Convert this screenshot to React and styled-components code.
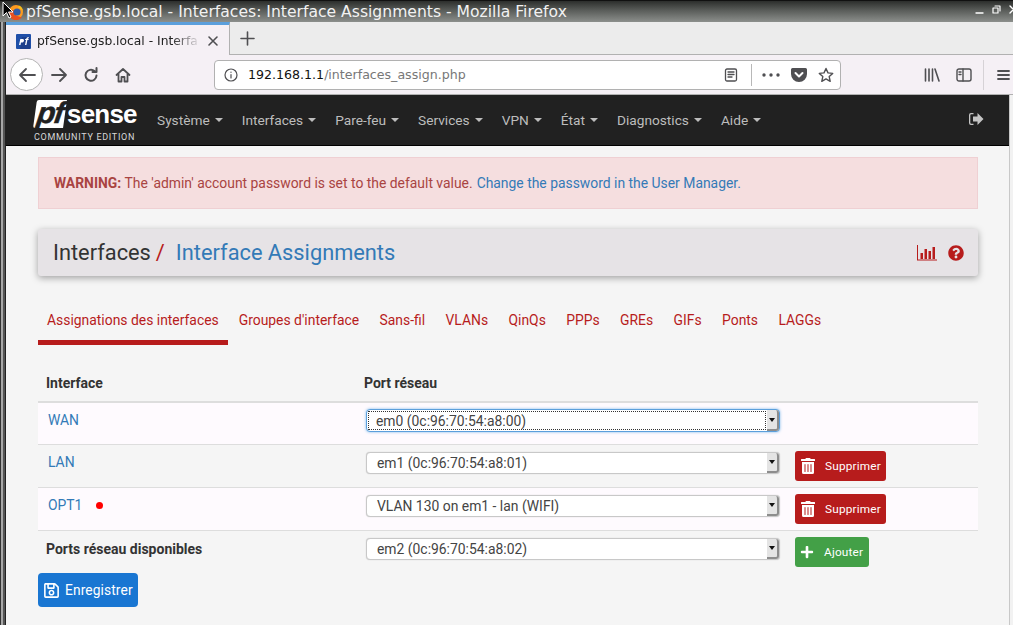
import React from 'react';
import styled, { createGlobalStyle } from 'styled-components';
import { FaTrashAlt, FaPlus, FaQuestionCircle, FaRegSave } from 'react-icons/fa';

const Global = createGlobalStyle`
  html, body { margin: 0; padding: 0; background: #f5f5f5; }
  * { box-sizing: border-box; }
`;

const Screen = styled.div`
  position: relative; width: 1013px; height: 625px; overflow: hidden;
  display: flex; flex-direction: column; background: #f5f5f5;
  font-family: Roboto, sans-serif; color: #333;
`;
const Titlebar = styled.div`
  height: 22px; flex: none; display: flex; align-items: center; padding: 0 0 0 8px;
  background: linear-gradient(#2c2e2c, #5a5d5a 45%, #8c8f8c);
  border-top: 1px solid #111;
  color: #f2f2f2; font: 15.6px "DejaVu Sans", sans-serif; white-space: nowrap;
`;
const TitleText = styled.span` margin-left: 2px; flex: 1; `;
const WinButtons = styled.div` display: flex; align-items: center; gap: 8px; width: 44px; margin-right: -6px; padding-bottom: 4px;`;
const Frame = styled.div`
  flex: 1; min-height: 0; display: flex; flex-direction: column; padding-left: 6px;
  background: linear-gradient(to right, #333 0 1px, #a8a8a8 1px 3px, #555 3px 5px, #222 5px 6px) left top / 6px 100% no-repeat;
`;
const TabStrip = styled.div`
  height: 33px; flex: none; display: flex; background: #ececec; border-bottom: 1px solid #b1b1b1;
`;
const ActiveTab = styled.div`
  width: 224px; height: 33px; display: flex; align-items: center; padding: 2px 10px 0 10px; gap: 6px;
  background: #f5f0f5; border-top: 3px solid #5b9fdc; border-right: 1px solid #b1b1b1;
  font: 12.3px "DejaVu Sans", sans-serif; color: #222; position: relative; z-index: 1;
`;
const TabLabel = styled.span`
  flex: 1; white-space: nowrap;
  -webkit-mask-image: linear-gradient(to right, #000 82%, transparent);
  mask-image: linear-gradient(to right, #000 82%, transparent);
`;
const NewTab = styled.div` width: 34px; display: flex; align-items: center; justify-content: center; `;
const Toolbar = styled.div`
  height: 40px; flex: none; display: flex; align-items: center; background: #f5f0f5;
  border-bottom: 1px solid #b1b1b1; padding-left: 4px; position: relative;
`;
const BackButton = styled.div`
  width: 33px; height: 33px; border-radius: 50%; background: #fff; border: 1px solid #b4b4b4;
  display: flex; align-items: center; justify-content: center; flex: none;
`;
const ToolIcon = styled.div`
  width: 32px; height: 32px; display: flex; align-items: center; justify-content: center; flex: none;
`;
const UrlBar = styled.div`
  margin-left: 75px; width: 627px; height: 30px; flex: none; background: #fff; border: 1px solid #b1b1b1; border-radius: 4px;
  display: flex; align-items: center; padding: 0 6px 0 9px; font: 12.6px "DejaVu Sans", sans-serif; color: #111;
`;
const UrlText = styled.span` margin-left: 10px; flex: 1; white-space: nowrap; `;
const UrlPath = styled.span` color: #777; `;
const UrlSep = styled.div` width: 1px; height: 22px; background: #b8b8b8; margin: 0 10px 0 13px; `;
const UrlIcons = styled.div` display: flex; align-items: center; gap: 11px; `;
const RightTools = styled.div` margin-left: 83px; display: flex; align-items: center; gap: 16px; `;
const ToolSep = styled.div` width: 1px; height: 30px; background: #d6d2d6; margin: 0 -3px 0 -5px;`;

const PageArea = styled.div` flex: 1; min-height: 0; display: flex; `;
const Page = styled.div` flex: 1; min-width: 0; display: flex; flex-direction: column; `;
const Scroll = styled.div` width: 4px; flex: none; background: #f2f2f2; border-left: 1px solid #c8c8c8; `;

const Nav = styled.nav`
  height: 51px; flex: none; background: #212121; border-bottom: 1px solid #000;
  display: flex; align-items: center; padding: 0 25px 0 28px; color: #bdbdbd; font-size: 13.7px;
`;
const Logo = styled.div` width: 103px; flex: none; color: #fff; margin-top: 2px; margin-right: 20px; `;
const LogoTop = styled.div` display: flex; align-items: center; height: 28px; `;
const LogoPf = styled.div`
  width: 30px; height: 28px; margin-left: 1px; background: #fff; color: #212121; transform: skewX(-8deg); border-radius: 2px 0 0 2px;
  font: italic 700 30px/25px "Liberation Sans", sans-serif; letter-spacing: -1.5px; text-align: center;
  -webkit-text-stroke: 0.5px #212121;
`;
const LogoSense = styled.span` font: 700 26px/28px "Liberation Sans", sans-serif; margin-left: 2px; letter-spacing: -0.8px; `;
const LogoSub = styled.div` font: 400 9px/10px Roboto, sans-serif; letter-spacing: 0.7px; color: #d8d8d8; white-space: nowrap; margin-top: 4px; `;
const NavItem = styled.div` display: flex; align-items: center; margin-right: 19px; white-space: nowrap; `;
const Caret = styled.span`
  display: inline-block; margin-left: 5px; border-top: 4px solid #bdbdbd; border-left: 4px solid transparent; border-right: 4px solid transparent;
`;
const NavSpacer = styled.div` flex: 1; `;

const Content = styled.main` flex: 1; min-height: 0; padding: 11px 31px 0 32px; display: flex; flex-direction: column; `;
const Alert = styled.div`
  height: 52px; flex: none; background: #f5dedf; border: 1px solid #efd0d3; color: #a94442; font-size: 13.9px;
  display: flex; align-items: center; padding: 0 15px; white-space: nowrap;
`;
const AlertLink = styled.span` color: #337ab7; margin-left: 4px; `;
const Heading = styled.div`
  margin-top: 20px; height: 47px; flex: none; background: #e6e3e6; border-radius: 3px; box-shadow: 0 2px 7px rgba(0,0,0,.35);
  display: flex; align-items: center; padding: 0 14px 0 15px; font-size: 21.8px; color: #333;
`;
const Slash = styled.span` color: #b71c1c; margin-left: 5px; margin-right: 11px; `;
const Crumb = styled.span` color: #337ab7; flex: 1; `;
const HeadIcons = styled.div` display: flex; align-items: center; gap: 11px; color: #b71c1c; `;
const Tabs = styled.div` margin-top: 20px; display: flex; height: 49px; flex: none; font-size: 13.9px; color: #b71c1c; `;
const TabItem = styled.div`
  padding: 16px ${p => (p.$active ? 9.4 : 10.4)}px 0 9px; height: 49px; white-space: nowrap;
  margin-right: ${p => (p.$active ? 1.6 : 1)}px;
  border-bottom: ${p => (p.$active ? '5px solid #b71c1c' : 'none')};
`;
const HeaderRow = styled.div`
  margin-top: 19px; height: 39px; flex: none; display: flex; align-items: center; font-weight: 700; font-size: 14px; padding-left: 8px;
  border-bottom: 2px solid #ddd;
`;
const InterfaceCol = styled.div` width: 318px; flex: none; `;
const Row = styled.div`
  height: ${p => p.$h}px; flex: none; display: flex; align-items: flex-start; background: ${p => (p.$tint ? '#fefafe' : 'transparent')};
  border-bottom: ${p => (p.$last ? 'none' : '1px solid #ddd')};
`;
const NameCell = styled.div`
  width: 328px; flex: none; padding: 0 0 0 10px; font-size: 13.9px; color: #337ab7; display: flex; align-items: center; height: 33px;
`;
const AvailableName = styled.div`
  width: 328px; flex: none; padding: 10px 0 0 8px; font-size: 14px; font-weight: 700; color: #333; white-space: nowrap;
`;
const Dot = styled.span` width: 7px; height: 7px; border-radius: 50%; background: #f00; margin-left: 14px; margin-top: 2px; `;
const SelectBox = styled.div`
  margin-top: ${p => p.$top}px; width: 414px; height: ${p => (p.$focus ? 23 : 22)}px; flex: none; display: flex; background: #fff; border-radius: 4px;
  border: 1px solid ${p => (p.$focus ? '#5b9fdc' : '#c8c8c8')};
  box-shadow: ${p => (p.$focus ? '0 0 3px #7db8ea' : '0 0 1px #bbb')};
  color: #444;
`;
const SelectValue = styled.div`
  flex: 1; line-height: ${p => (p.$focus ? 22 : 20)}px; padding-left: ${p => (p.$pad ? p.$pad : 10)}px; white-space: nowrap;
  outline: ${p => (p.$focus ? '1px dotted #333' : 'none')}; outline-offset: -2px; font-size: 13.9px;
`;
const SelectArrow = styled.div`
  width: 12px; flex: none; background: #e4e4e4; border-right: 2px solid #8d8d8d; border-bottom: 2px solid #8d8d8d;
  border-radius: 0 3px 3px 0; display: flex; align-items: center; justify-content: center;
`;
const Arrow = styled.span` border-top: 4px solid #111; border-left: 3px solid transparent; border-right: 3px solid transparent; `;
const ActionButton = styled.div`
  margin-left: 15px; margin-top: ${p => p.$top}px; height: 30px; width: ${p => p.$w}px; border-radius: 3px; flex: none;
  background: ${p => p.$bg}; color: #fff; display: flex; align-items: center; padding-left: 5px; font-size: 11.8px; letter-spacing: .2px;
`;
const ActionLabel = styled.span` margin-left: ${p => p.$gap}px; white-space: nowrap; `;
const SaveButton = styled.div`
  width: 100px; height: 34px; flex: none; border-radius: 4px; background: #1976d2; color: #fff; margin-top: 1px;
  display: flex; align-items: center; padding-left: 5px; font-size: 13.8px; letter-spacing: .1px; gap: 5px;
`;
const Cursor = styled.svg` position: absolute; left: 2px; top: 1px; `;

const Firefox = () => (
  <svg width="16" height="16" viewBox="0 0 16 16" style={{ flex: 'none' }}>
    <circle cx="8" cy="8" r="7" fill="#ff9a1f" />
    <path d="M2 5a7 7 0 0 0 12 8C9 13 5 10 6 6 4 7 3 6 2 5z" fill="#e8501f" />
    <circle cx="9" cy="8" r="3.6" fill="#2f5ca8" />
    <path d="M11 1.6A7 7 0 0 1 15 8c-1-3-3-4-5-4z" fill="#f6c21c" />
  </svg>
);
const Favicon = () => (
  <svg width="15" height="15" viewBox="0 0 15 15" style={{ flex: 'none' }}>
    <rect width="15" height="15" rx="1" fill="#1f4fa8" />
    <path d="M4 15l2-12h8v12z" fill="#1a3578" opacity=".6" />
    <path d="M3 11l1.3-6h2.3c1.4 0 1.6 1 1.3 2-.3 1-1.2 1.6-2.3 1.6H5L4.500 11zM9 11l1-5H9l.2-1h1c.2-1.300 1-2 2.800-1.800l-.2 1c-.8 0-1.100.2-1.200.8h1.100l-.2 1h-1.100l-1 5z" fill="#fff" />
  </svg>
);
const Stroke = ({ children, w = 16, h = 16, sw = 1.8, c = '#4f4f52' }) => (
  <svg width={w} height={h} viewBox={`0 0 ${w} ${h}`} fill="none" stroke={c} strokeWidth={sw} strokeLinecap="round" strokeLinejoin="round" style={{ flex: 'none' }}>{children}</svg>
);

const navs = ['Système', 'Interfaces', 'Pare-feu', 'Services', 'VPN', 'État', 'Diagnostics', 'Aide'];
const tabs = ['Assignations des interfaces', "Groupes d'interface", 'Sans-fil', 'VLANs', 'QinQs', 'PPPs', 'GREs', 'GIFs', 'Ponts', 'LAGGs'];

const Sel = ({ top, focus, pad, children }) => (
  <SelectBox $top={top} $focus={focus}>
    <SelectValue $focus={focus} $pad={pad}>{children}</SelectValue>
    <SelectArrow><Arrow /></SelectArrow>
  </SelectBox>
);
const Del = ({ top }) => (
  <ActionButton $top={top} $w={91} $bg="#b71c1c"><FaTrashAlt size={16} /><ActionLabel $gap={9}>Supprimer</ActionLabel></ActionButton>
);

export default function App() {
  return (
    <Screen>
      <Global />
      <Titlebar>
        <Firefox />
        <TitleText>pfSense.gsb.local - Interfaces: Interface Assignments - Mozilla Firefox</TitleText>
        <WinButtons>
          <Stroke w={9} h={9} sw={1.4} c="#fff"><path d="M1 8h7" /></Stroke>
          <Stroke w={9} h={9} sw={1.2} c="#fff"><path d="M3 1h5v5M1 3h5v5H1z" /></Stroke>
          <Stroke w={9} h={9} sw={1.4} c="#fff"><path d="M1 1l7 7M8 1L1 8" /></Stroke>
        </WinButtons>
      </Titlebar>
      <Frame>
        <TabStrip>
          <ActiveTab>
            <Favicon />
            <TabLabel>pfSense.gsb.local - Interfa</TabLabel>
            <Stroke w={12} h={12} sw={1.6}><path d="M2 2l8 8M10 2l-8 8" /></Stroke>
          </ActiveTab>
          <NewTab><Stroke w={15} h={15} sw={1.6}><path d="M7.500 1v13M1 7.500h13" /></Stroke></NewTab>
        </TabStrip>
        <Toolbar>
          <BackButton><Stroke w={18} h={16} sw={1.8}><path d="M17 8H2M8 2L2 8l6 6" /></Stroke></BackButton>
          <ToolIcon><Stroke w={16} h={14} sw={1.8}><path d="M1 7h14M9 1l6 6-6 6" /></Stroke></ToolIcon>
          <ToolIcon><Stroke w={16} h={16} sw={2}><path d="M13.500 8.500A5.500 5.500 0 1 1 11.500 4M13.500 1v4h-4" /></Stroke></ToolIcon>
          <ToolIcon><Stroke w={16} h={16} sw={1.8}><path d="M1.500 8L8 2l6.500 6M3.500 7v7.500h3V10h3v4.500h3V7" /></Stroke></ToolIcon>
          <UrlBar>
            <Stroke w={14} h={14} sw={1.2}><circle cx="7" cy="7" r="6" /><path d="M7 6.500v3.500M7 4v.3" /></Stroke>
            <UrlText>192.168.1.1<UrlPath>/interfaces_assign.php</UrlPath></UrlText>
            <Stroke w={14} h={14} sw={1.3}><rect x="1.500" y="1" width="11" height="12" rx="1.500" /><path d="M4 4h6M4 6.500h6M4 9h4" /></Stroke>
            <UrlSep />
            <UrlIcons>
              <svg width="18" height="4" viewBox="0 0 18 4" fill="#4f4f52"><circle cx="2" cy="2" r="1.700" /><circle cx="9" cy="2" r="1.700" /><circle cx="16" cy="2" r="1.700" /></svg>
              <svg width="16" height="14" viewBox="0 0 16 14"><path d="M1.500 0h13A1.500 1.500 0 0 1 16 1.500V6A8 8 0 0 1 0 6V1.500A1.500 1.500 0 0 1 1.500 0z" fill="#4f4f52" /><path d="M4.500 5L8 8.500 11.500 5" fill="none" stroke="#fff" strokeWidth="2" strokeLinecap="round" strokeLinejoin="round" /></svg>
              <Stroke w={16} h={16} sw={1.4}><path d="M8 1.500l2 4.400 4.700.5-3.500 3.200 1 4.700L8 11.900l-4.200 2.400 1-4.700L1.300 6.400 6 5.900z" /></Stroke>
            </UrlIcons>
          </UrlBar>
          <RightTools>
            <Stroke w={16} h={14} sw={1.6}><path d="M1.500 1v12M5 1v12M8.500 1v12M11 1l4 12" /></Stroke>
            <Stroke w={16} h={14} sw={1.4}><rect x="1" y="1" width="14" height="12" rx="2" /><path d="M7 1v12" /><path d="M3 4h2M3 6.500h2" /></Stroke>
            <ToolSep />
            <Stroke w={13} h={12} sw={1.8}><path d="M1 2h11M1 6h11M1 10h11" /></Stroke>
          </RightTools>
        </Toolbar>
        <PageArea>
          <Page>
            <Nav>
              <Logo>
                <LogoTop><LogoPf>pf</LogoPf><LogoSense>sense</LogoSense></LogoTop>
                <LogoSub>COMMUNITY EDITION</LogoSub>
              </Logo>
              {navs.map(n => <NavItem key={n}>{n}<Caret /></NavItem>)}
              <NavSpacer />
              <svg width="16" height="14" viewBox="0 0 16 14" fill="#c4c4c4" style={{ marginTop: -3 }}><path d="M5.500 1H3a2 2 0 0 0-2 2v8a2 2 0 0 0 2 2h2.500v-1.300H3.200a.9.9 0 0 1-.9-.9V3.200a.9.9 0 0 1 .9-.9h2.300z" /><path d="M9.500 1L15.500 7l-6 6V9.500H5v-5h4.500z" /></svg>
            </Nav>
            <Content>
              <Alert><strong>WARNING:</strong>&nbsp;The 'admin' account password is set to the default value.<AlertLink>Change the password in the User Manager.</AlertLink></Alert>
              <Heading>
                Interfaces<Slash>/</Slash><Crumb>Interface Assignments</Crumb>
                <HeadIcons>
                  <svg width="21" height="16" viewBox="0 0 21 16" fill="#b71c1c"><path d="M1 0h1v14.500h19v1H1z" /><rect x="4.500" y="8" width="2.500" height="6" /><rect x="8.500" y="4" width="2.500" height="10" /><rect x="12.500" y="6" width="2.500" height="8" /><rect x="16.500" y="2" width="2.500" height="12" /></svg>
                  <FaQuestionCircle size={16} />
                </HeadIcons>
              </Heading>
              <Tabs>
                {tabs.map((t, i) => <TabItem key={t} $active={i === 0}>{t}</TabItem>)}
              </Tabs>
              <HeaderRow><InterfaceCol>Interface</InterfaceCol>Port réseau</HeaderRow>
              <Row $h={42} $tint>
                <NameCell>WAN</NameCell>
                <Sel top={6} focus pad={9}>em0 (0c:96:70:54:a8:00)</Sel>
              </Row>
              <Row $h={43}>
                <NameCell>LAN</NameCell>
                <Sel top={7}>em1 (0c:96:70:54:a8:01)</Sel>
                <Del top={6} />
              </Row>
              <Row $h={43} $tint>
                <NameCell>OPT1<Dot /></NameCell>
                <Sel top={7}>VLAN 130 on em1 - lan (WIFI)</Sel>
                <Del top={6} />
              </Row>
              <Row $h={41} $last>
                <AvailableName>Ports réseau disponibles</AvailableName>
                <Sel top={7}>em2 (0c:96:70:54:a8:02)</Sel>
                <ActionButton $top={6} $w={74} $bg="#43a047"><FaPlus size={14} /><ActionLabel $gap={10}>Ajouter</ActionLabel></ActionButton>
              </Row>
              <SaveButton><FaRegSave size={17} />Enregistrer</SaveButton>
            </Content>
          </Page>
          <Scroll />
        </PageArea>
      </Frame>
      <Cursor width="12" height="18" viewBox="0 0 12 18"><path d="M1 1v14l3.500-3.500 2.500 5.500 2-1-2.500-5H11z" fill="#000" stroke="#fff" strokeWidth="1" /></Cursor>
    </Screen>
  );
}
